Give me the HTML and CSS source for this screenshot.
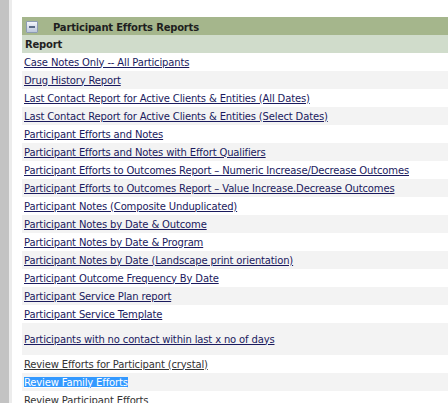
FILE: index.html
```html
<!DOCTYPE html>
<html lang="en">
<head>
  <meta charset="UTF-8">
  <title>Participant Efforts Reports</title>
  <link rel="stylesheet" href="styles.css">
</head>
<body>
<div class="page">
  <div class="sidebar"></div>
  <div class="content">
    <table class="reports">
      <tr class="group">
        <td>
          <div class="group-bar"><span class="toggle"><span class="dash"></span></span>Participant Efforts Reports</div>
        </td>
      </tr>
      <tr class="head"><td>Report</td></tr>
      <tr><td><a href="#">Case Notes Only -- All Participants</a></td></tr>
      <tr class="alt"><td><a href="#">Drug History Report</a></td></tr>
      <tr><td><a href="#">Last Contact Report for Active Clients &amp; Entities (All Dates)</a></td></tr>
      <tr class="alt"><td><a href="#">Last Contact Report for Active Clients &amp; Entities (Select Dates)</a></td></tr>
      <tr><td><a href="#">Participant Efforts and Notes</a></td></tr>
      <tr class="alt"><td><a href="#">Participant Efforts and Notes with Effort Qualifiers</a></td></tr>
      <tr><td><a href="#">Participant Efforts to Outcomes Report &ndash; Numeric Increase/Decrease Outcomes</a></td></tr>
      <tr class="alt"><td><a href="#">Participant Efforts to Outcomes Report &ndash; Value Increase.Decrease Outcomes</a></td></tr>
      <tr><td><a href="#">Participant Notes (Composite Unduplicated)</a></td></tr>
      <tr class="alt"><td><a href="#">Participant Notes by Date &amp; Outcome</a></td></tr>
      <tr><td><a href="#">Participant Notes by Date &amp; Program</a></td></tr>
      <tr class="alt"><td><a href="#">Participant Notes by Date (Landscape print orientation)</a></td></tr>
      <tr><td><a href="#">Participant Outcome Frequency By Date</a></td></tr>
      <tr class="alt"><td><a href="#">Participant Service Plan report</a></td></tr>
      <tr><td><a href="#">Participant Service Template</a></td></tr>
      <tr class="alt tall"><td><a href="#">Participants with no contact within last x no of days</a></td></tr>
      <tr><td><a class="seen" href="#">Review Efforts for Participant (crystal)</a></td></tr>
      <tr class="alt"><td><a class="picked" href="#">Review Family Efforts</a></td></tr>
      <tr><td><a class="seen" href="#">Review Participant Efforts</a></td></tr>
    </table>
  </div>
</div>
</body>
</html>
```

FILE: styles.css
```css
body {
  margin: 0;
  font-family: "DejaVu Sans", Verdana, sans-serif;
  font-size: 10px;
  letter-spacing: -0.15px;
  color: #222;
  background: #fff;
}
.page {
  display: flex;
  min-height: 403px;
}
.sidebar {
  width: 9px;
  background: #c3c3c3;
  border-right: 3px solid #ececec;
}
.content {
  flex: 1;
  padding: 17px 0 0 10px;
}
.reports {
  width: 100%;
  border-collapse: collapse;
}
.reports td {
  height: 18px;
  padding: 0 2px;
  white-space: nowrap;
}
.reports .alt td {
  background: #f3f3f3;
}
.reports .tall td {
  height: 32px;
}
.group td {
  background: #a5b68c;
  font-weight: bold;
  letter-spacing: -0.2px;
  color: #1e1e1e;
}
.group-bar {
  display: flex;
  align-items: center;
  height: 18px;
  padding-top: 2px;
  box-sizing: border-box;
}
.head td {
  background: #d0dccb;
  font-weight: bold;
  letter-spacing: -0.2px;
  padding-left: 3px;
}
/* collapse button left of the group title */
.toggle {
  display: flex;
  align-items: center;
  justify-content: center;
  width: 10px;
  height: 10px;
  margin: 0 15px 0 2px;
  border: 1px solid #8d9cb4;
  border-radius: 1px;
  background: linear-gradient(#f4f6fb, #bcc7dc);
}
.dash {
  width: 6px;
  height: 2px;
  background: #5a6a86;
}
a {
  color: #1a1a5e;
  text-decoration: underline;
}
a.seen {
  color: #333;
}
a.picked {
  background: #3399ff;
  color: #fff;
}
```
